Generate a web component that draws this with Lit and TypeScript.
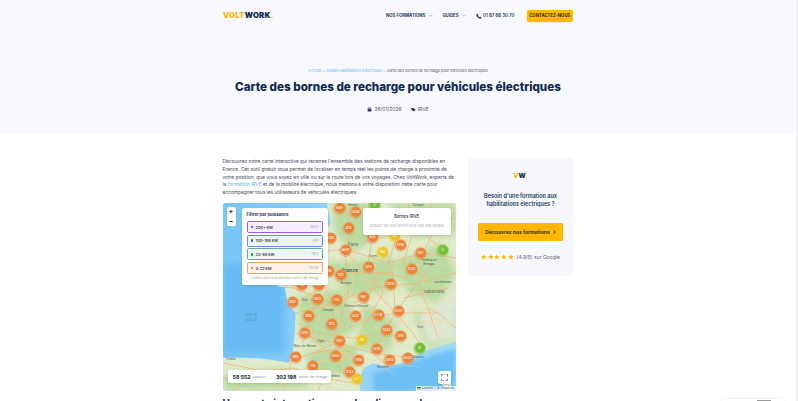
import { LitElement, html, css, svg } from "lit";
import { customElement } from "lit/decorators.js";

type Cluster = [number, number, string, string];
const clusters: Cluster[] = [
  [340,208,"689","o"],[356,212,"2348","o"],[375,205,"2","g"],[349,228,"814","o"],[331,238,"1130","o"],
  [373,237,"805","o"],[395,236,"90","y"],[346,250,"8641","o"],[383,252,"100","y"],[401,245,"1746","o"],
  [421,253,"987","o"],[443,250,"3","g"],[369,267,"875","o"],[412,269,"1253","o"],[341,275,"1141","o"],
  [329,271,"910","o"],[302,285,"740","o"],[319,285,"632","o"],[391,284,"1078","o"],
  [293,302,"1087","o"],[318,299,"1472","o"],[337,300,"215","o"],[364,297,"987","o"],[309,316,"480","o"],
  [356,316,"620","o"],[379,315,"2778","o"],[399,311,"2547","o"],[332,324,"1115","o"],[387,330,"1244","o"],
  [305,333,"2015","o"],[401,336,"398","o"],[340,341,"490","o"],[362,340,"29","y"],[377,349,"1479","o"],
  [420,348,"6","g"],[336,356,"7865","o"],[296,357,"910","o"],[359,360,"1148","o"],[390,360,"2043","o"],
  [408,358,"2420","o"],[313,366,"718","o"],[350,372,"1233","o"],[357,379,"27","y"],
];

const roads = [
  "M122 0 L128 30 L122 46 L125 90 L112 140 L118 170",
  "M122 46 L165 60 L200 50 L233 55",
  "M122 46 L150 85 L172 110 L190 130 L200 146",
  "M122 46 L85 50 L70 85 L62 84 M85 50 L110 100 L112 140",
  "M70 85 L110 100 L150 85 L195 80 L233 70",
  "M73 110 L110 100 M72 130 L112 140 L150 150 L165 163",
  "M172 110 L195 80 L210 60 M172 110 L215 110 L233 125",
  "M112 140 L90 150 L68 158 M112 140 L125 160 L136 178",
  "M172 110 L150 150 M150 150 L190 155 M172 110 L170 70 L165 60",
  "M0 160 L40 168 L70 165 L100 175 L130 180",
  "M10 188 L30 165 M60 188 L68 160 M95 188 L100 175",
  "M140 40 L175 30 L200 10 M165 60 L175 30 M200 50 L215 20 L233 15",
  "M88 115 L125 90 L160 110 M88 115 L80 140 M125 125 L150 115 L172 110",
  "M195 80 L205 105 L215 135 M215 110 L205 105 M180 95 L225 85",
  "M95 75 L130 70 L170 70 M100 60 L95 75 L88 115",
  "M140 0 L150 30 L145 60 L160 90 L140 125 M185 0 L190 30 L180 60 L205 75",
  "M75 120 L95 130 L130 135 L160 130 L185 135 M90 150 L120 145 L140 160",
  "M208 0 L205 35 L225 50 M0 175 L25 178 L50 172 L75 180 M105 150 L85 130",
  "M70 100 L90 90 L100 72 M130 100 L145 95 L155 70 L185 75",
];

const greens = [
  "M110 0 L150 0 L160 30 L130 50 L112 30 Z","M170 60 L220 40 L233 70 L215 100 L185 90 Z",
  "M75 95 L120 85 L135 125 L100 145 L78 130 Z","M140 100 L175 120 L165 150 L135 145 Z",
  "M190 110 L233 100 L233 135 L205 145 Z","M0 172 L60 165 L90 185 L0 188 Z","M165 0 L233 0 L233 30 L190 35 Z",
  "M100 60 L170 55 L175 85 L130 95 Z","M80 150 L135 140 L130 170 L95 172 Z",
];

const labels: [number, number, string, string][] = [
  [127,69,"France","big"],[130,43,"Paris","l"],[211,90,"Switzerland","m"],[105,108,"Limoges","s"],[123,81,"Bourges","s"],
  [82,98,"Nort","s"],[133,104,"Clermont-Ferrand","s"],[82,144,"Mont-de-Marsan","s"],[98,139,"Agen","s"],[150,54,"Troyes","s"],
  [206,58,"Freiburg im","s"],[206,62,"Breisgau","s"],[8,157,"Oviedo","s"],[160,165,"Marseille","s"],[195,155,"Monaco","s"],
  [197,125,"Turin","s"],[110,174,"Barcelona","s"],[195,3,"Cologne","s"],[220,80,"Liechtenstein","s"],[130,3,"Amiens","s"],
];

const rows = [
  { cls: "violet", label: "200+ kW", n: "4237" },
  { cls: "blue", label: "100-199 kW", n: "5111" },
  { cls: "teal", label: "23-99 kW", n: "7918" },
  { cls: "amber", label: "3-22 kW", n: "41286" },
];

@customElement("app-root")
export class AppRoot extends LitElement {
  static styles = css`
    :host { display: block; height: 401px; overflow: hidden; font-family: Inter, "Open Sans", sans-serif; color: #0f2a52; background: #fff; }
    .page { display: flex; height: 401px; overflow: hidden; position: relative; }
    .main { flex: 1; min-width: 0; }
    .scrollbar { width: 2px; background: #f1f1f3; }
    .hero { background: #f8f9ff; height: 133px; display: flex; flex-direction: column; align-items: center; }
    .header { width: 350px; height: 31px; display: flex; align-items: center; }
    .logo { font-size: 7.7px; font-weight: 900; letter-spacing: 0.25px; color: #0f2a52; }
    .logo b { color: #ffb703; font-weight: 900; }
    .nav { margin-left: auto; display: flex; align-items: center; font-size: 4.3px; font-weight: 700; color: #23395d; }
    .nav .chev { width: 4px; height: 3px; margin: 0 6.5px 0 4px; color: #8b97ad; }
    .nav .guides { margin-left: 2.5px; }
    .phone { display: flex; align-items: center; gap: 1px; font-size: 4.45px; font-weight: 600; margin-right: 12px; margin-left: 3px; }
    .phone svg { width: 6px; height: 6px; }
    .cta { background: #ffb703; color: #2a2a1e; border-radius: 2px; font-size: 4.3px; font-weight: 700; padding: 4px 0; width: 46.5px; height: 12px; box-sizing: border-box; text-align: center; line-height: 4.4px; box-shadow: 0 0 0 .5px #ffe9b3; }
    .crumb { margin-top: 36px; font-size: 3.76px; line-height: 8px; color: #4a5568; }
    .crumb a { color: #5fb4ec; }
    h1 { margin: 2px 0 0; font-size: 11.65px; font-weight: 800; line-height: 20px; color: #0f2a52; }
    .meta { margin-top: 8px; display: flex; align-items: center; font-size: 5px; color: #4a5568; line-height: 8px; }
    .meta svg { width: 5px; height: 5px; margin-right: 2px; color: #23395d; }
    .meta .sp { width: 9px; }
    .content { width: 351px; margin: 25px auto 0; display: flex; gap: 12px; align-items: flex-start; }
    .left { width: 233px; flex: none; }
    .intro { margin: 0; font-size: 4.83px; line-height: 7.75px; color: #3f4957; width: 233px; }
    .intro a { color: #5fb4ec; }
    .map { position: relative; width: 233px; height: 188px; margin-top: 6.25px; border-radius: 3px; overflow: hidden; background: #8fd0f7; }
    .map > svg { display: block; width: 233px; height: 188px; }
    .cl { position: absolute; width: 13px; height: 13px; margin: -6.5px 0 0 -6.5px; border-radius: 50%; display: flex; align-items: center; justify-content: center; font-size: 3.3px; color: #fff; font-weight: 500; }
    .cl span { width: 10px; height: 10px; border-radius: 50%; display: flex; align-items: center; justify-content: center; }
    .cl.o { background: rgba(240,130,70,.45); } .cl.o span { background: #ee8236; }
    .cl.y { background: rgba(240,210,60,.5); } .cl.y span { background: #eec52a; }
    .cl.g { background: rgba(120,200,70,.5); } .cl.g span { background: #76bf3a; }
    .zoom { position: absolute; left: 4px; top: 4px; width: 9px; height: 19px; background: #fff; border-radius: 1.5px; display: flex; flex-direction: column; align-items: center; justify-content: space-around; font-size: 7px; line-height: 9px; font-weight: 700; color: #222; box-shadow: 0 0 1px rgba(0,0,0,.3); }
    .filter { position: absolute; left: 19px; top: 5px; width: 86px; height: 77px; box-sizing: border-box; background: #fff; border-radius: 2.5px; padding: 4px 5px; box-shadow: 0 1px 3px rgba(0,0,0,.12); }
    .filter h4 { margin: 0 0 3px; font-size: 4.2px; line-height: 6px; font-weight: 700; color: #2b3648; }
    .row { height: 12px; box-sizing: border-box; border: 1px solid; border-radius: 1.5px; margin-bottom: 1.7px; display: flex; align-items: center; padding: 0 3px; font-size: 3.9px; font-weight: 600; color: #3d4757; }
    .row i { width: 2.6px; height: 2.6px; border-radius: 50%; margin-right: 2.5px; }
    .row em { margin-left: auto; font-style: normal; font-weight: 400; color: #9aa3b2; font-size: 3.3px; }
    .violet { border-color: #9b5de5; background: #f4eefd; } .violet i { background: #7c1ff0; }
    .blue { border-color: #5b8def; background: #edf2fd; } .blue i { background: #1c5ff0; }
    .teal { border-color: #5fae8d; background: #edf6f1; } .teal i { background: #0c8a55; }
    .amber { border-color: #f0a45c; background: #fdf2e8; } .amber i { background: #ea6c0c; }
    .note { font-size: 3.2px; color: #9aa3b2; text-align: center; margin-top: 2px; line-height: 5px; white-space: nowrap; }
    .popup { position: absolute; left: 140px; top: 5px; width: 88px; height: 27px; background: #fff; border-radius: 2.5px; box-shadow: 0 1px 3px rgba(0,0,0,.12); text-align: center; font-size: 4.3px; color: #2b3648; }
    .popup p { margin: 0; line-height: 6px; font-weight: 500; padding-top: 6px; }
    .popup small { display: block; margin-top: 3px; font-size: 3.7px; line-height: 5px; color: #a3abba; white-space: nowrap; }
    .stats { position: absolute; left: 5px; top: 167px; width: 103px; height: 13px; box-sizing: border-box; background: #fff; border-radius: 2.5px; display: flex; align-items: center; padding: 0 5px; font-size: 3.6px; color: #8a94a6; box-shadow: 0 1px 3px rgba(0,0,0,.12); white-space: nowrap; }
    .stats b { font-size: 5.2px; font-weight: 800; color: #2b3648; margin-right: 2px; }
    .stats u { width: .5px; height: 9px; background: #e4e7ec; margin: 0 5px; text-decoration: none; }
    .fs { position: absolute; left: 215px; top: 168px; width: 13px; height: 13px; background: #fff; border-radius: 2.5px; display: flex; align-items: center; justify-content: center; box-shadow: 0 1px 2px rgba(0,0,0,.15); }
    .fs svg { width: 7px; height: 7px; color: #4a5568; }
    .attr { position: absolute; right: 0; bottom: 0; height: 5.5px; background: rgba(255,255,255,.75); font-size: 3.6px; line-height: 5.5px; padding: 0 1px; color: #3a70a8; display: flex; align-items: center; gap: 1px; white-space: nowrap; }
    .attr svg { width: 4px; height: 3px; }
    h2 { margin: 6px 0 0; font-size: 10.2px; line-height: 13px; font-weight: 700; white-space: nowrap; color: #0f2a52; }
    .side { width: 106px; flex: none; height: 118px; box-sizing: border-box; background: #f7f8fd; border-radius: 4px; display: flex; flex-direction: column; align-items: center; padding-top: 14px; }
    .vw { font-size: 6.6px; line-height: 8px; font-weight: 900; color: #0f2a52; letter-spacing: .1px; }
    .vw b { color: #ffb703; font-weight: 900; }
    .side h3 { margin: 12px 0 0; font-size: 5.5px; line-height: 8px; font-weight: 600; color: #23395d; text-align: center; }
    .btn { margin-top: 15px; width: 85px; height: 18px; background: #ffb703; border-radius: 1.5px; display: flex; align-items: center; justify-content: center; font-size: 5px; font-weight: 700; color: #2f2f22; gap: 3px; }
    .btn svg { width: 3px; height: 4px; }
    .rate { margin-top: 12px; display: flex; align-items: center; font-size: 5px; color: #5a6473; gap: 3.5px; line-height: 8px; }
    .stars { display: flex; gap: 1px; } .stars svg { width: 5.6px; height: 5.6px; color: #ffb703; }
    .widget { position: absolute; left: 722px; top: 399px; width: 63px; height: 6px; background: #fff; border-radius: 2px; box-shadow: 0 0 3px rgba(0,0,0,.12); }
    .widget i { position: absolute; left: 35px; top: 1px; width: 14px; height: 4px; background: #9a9a9a; }
  `;

  private chev() {
    return html`<svg class="chev" viewBox="0 0 8 6"><path d="M1 1.5 L4 4.5 L7 1.5" fill="none" stroke="currentColor" stroke-width="1.2"/></svg>`;
  }

  private mapSvg() {
    return html`<svg viewBox="0 0 233 188">
      <defs>
        <linearGradient id="sea" x1="0" y1="0" x2="1" y2="0"><stop offset="0" stop-color="#78c6f6"/><stop offset="1" stop-color="#a4dcf8"/></linearGradient>
        <filter id="b" x="-20%" y="-20%" width="140%" height="140%"><feGaussianBlur stdDeviation="3"/></filter>
        <filter id="c" x="-10%" y="-10%" width="120%" height="120%"><feGaussianBlur stdDeviation="2.5"/></filter>
      </defs>
      <rect width="233" height="188" fill="url(#sea)"/>
      <rect x="0" y="60" width="62" height="90" fill="#68bcf3" filter="url(#b)"/>
      <path d="M150 170 L233 145 L233 188 L150 188 Z" fill="#6cc0f5" filter="url(#c)"/>
      ${svg`<path d="M104 0 L108 20 L100 32 L60 60 L55 83 L62 84 L65 100 L73 110 L72 130 L70 150 L66 160 L40 156 L20 155 L0 155 L0 188 L137 188 L136 178 L140 165 L150 160 L165 163 L185 158 L200 148 L233 138 L233 0 Z" fill="#dfebca" stroke="#cfe8ea" stroke-width=".8"/>
      <path d="M218 188 L222 170 L228 168 L228 188 Z" fill="#d9e8c6"/>
      <g filter="url(#b)" fill="#b5d99c" opacity=".9">${greens.map((d) => svg`<path d=${d}/>`)}</g>
      <path d="M195 110 L233 95 L233 135 L205 140 Z" fill="#e6e9dc" opacity=".8" filter="url(#c)"/>
      <g fill="none" stroke="#f5b277" stroke-width=".75" stroke-linejoin="round">${roads.map((d) => svg`<path d=${d}/>`)}</g>
      <g fill="none" stroke="#f9d3a0" stroke-width=".45">${roads.map((d) => svg`<path d=${d} transform="translate(6 9)"/>`)}</g>
      <g font-family="Inter, sans-serif" fill="#4f5a50" text-anchor="middle">
        ${labels.map(([x, y, t, k]) => svg`<text x=${x} y=${y} font-size=${k === "big" ? 5 : k === "l" ? 4.2 : k === "m" ? 3.7 : 2.8} font-weight=${k === "big" ? 600 : 400}>${t}</text>`)}
      </g>
      <text x="28" y="113" font-family="Inter, sans-serif" font-size="3.7" font-style="italic" fill="#4a8fc4" text-anchor="middle">Bay of</text>
      <text x="28" y="118" font-family="Inter, sans-serif" font-size="3.7" font-style="italic" fill="#4a8fc4" text-anchor="middle">Biscay</text>`}
    </svg>`;
  }

  render() {
    return html`<div class="page">
      <div class="main">
        <section class="hero">
          <div class="header">
            <div class="logo"><b>VOLT</b>WORK<b>.</b></div>
            <nav class="nav">
              <span>NOS FORMATIONS</span>${this.chev()}
              <span class="guides">GUIDES</span>${this.chev()}
              <span class="phone"><svg viewBox="0 0 24 24" fill="currentColor"><path d="M6.6 2.5 L10 8.5 L7.8 11 C9 13.5 11 15.5 13.5 16.7 L16 14.4 L22 17.6 L20.8 21 C20 22.5 18 23 16 22.5 C8.5 20.5 3.5 15.5 1.7 8.5 C1.2 6.5 2 4.5 3.4 3.6 Z"/></svg>01 87 66 30 70</span>
              <span class="cta">CONTACTEZ-NOUS</span>
            </nav>
          </div>
          <div class="crumb"><a>Accueil</a> &gt; <a>Guides Habilitations Électriques</a> &gt; Carte des bornes de recharge pour véhicules électriques</div>
          <h1>Carte des bornes de recharge pour véhicules électriques</h1>
          <div class="meta">
            <svg viewBox="0 0 24 24" fill="currentColor"><path d="M3 9 H21 V22 H3 Z M3 4 H7 V1 H9 V4 H15 V1 H17 V4 H21 V7.5 H3 Z"/></svg>
            <span>26/01/2026</span><span class="sp"></span>
            <svg viewBox="0 0 24 24" fill="currentColor"><path d="M1 5 H12 L23 13 L13 21 L1 12 Z"/></svg>
            <span>IRVE</span>
          </div>
        </section>
        <section class="content">
          <div class="left">
            <p class="intro">Découvrez notre carte interactive qui recense l'ensemble des stations de recharge disponibles en France. Cet outil gratuit vous permet de localiser en temps réel les points de charge à proximité de votre position, que vous soyez en ville ou sur la route lors de vos voyages. Chez VoltWork, experts de la <a>formation IRVE</a> et de la mobilité électrique, nous mettons à votre disposition cette carte pour accompagner tous les utilisateurs de véhicules électriques.</p>
            <div class="map">
              ${this.mapSvg()}
              ${clusters.map(([x, y, t, k]) => html`<div class="cl ${k}" style="left:${x - 223}px;top:${y - 203}px"><span>${t}</span></div>`)}
              <div class="zoom"><span>+</span><span>−</span></div>
              <div class="filter">
                <h4>Filtrer par puissance</h4>
                ${rows.map((r) => html`<div class="row ${r.cls}"><i></i>${r.label}<em>${r.n}</em></div>`)}
                <div class="note">1 station peut avoir plusieurs points de charge</div>
              </div>
              <div class="popup"><p>Bornes IRVE</p><small>Cliquez sur une borne pour voir ses détails</small></div>
              <div class="stats"><b>58 552</b>stations<u></u><b>302 198</b>points de charge</div>
              <div class="fs"><svg viewBox="0 0 14 14" fill="none" stroke="currentColor" stroke-width="1.4"><path d="M1 5 V1 H5 M9 1 H13 V5 M13 9 V13 H9 M5 13 H1 V9"/></svg></div>
              <div class="attr"><svg viewBox="0 0 8 6"><rect width="8" height="3" fill="#3a6fc4"/><rect y="3" width="8" height="3" fill="#f5d020"/></svg>Leaflet | © Mapbox</div>
            </div>
            <h2>Une carte interactive pour localiser vos bornes</h2>
          </div>
          <aside class="side">
            <div class="vw"><b>V</b>W<b>.</b></div>
            <h3>Besoin d'une formation aux<br />habilitations électriques ?</h3>
            <div class="btn">Découvrez nos formations <svg viewBox="0 0 6 8"><path d="M1 1 L4.5 4 L1 7" fill="none" stroke="currentColor" stroke-width="1.5"/></svg></div>
            <div class="rate">
              <span class="stars">${[0, 1, 2, 3, 4].map(() => html`<svg viewBox="0 0 24 24" fill="currentColor"><path d="M12 1 L15.4 8.2 L23 9.3 L17.5 14.8 L18.8 22.8 L12 19 L5.2 22.8 L6.5 14.8 L1 9.3 L8.6 8.2 Z"/></svg>`)}</span>
              <span>(4.9/5) sur Google</span>
            </div>
          </aside>
        </section>
      </div>
      <div class="scrollbar"></div>
      <div class="widget"><i></i></div>
    </div>`;
  }
}
